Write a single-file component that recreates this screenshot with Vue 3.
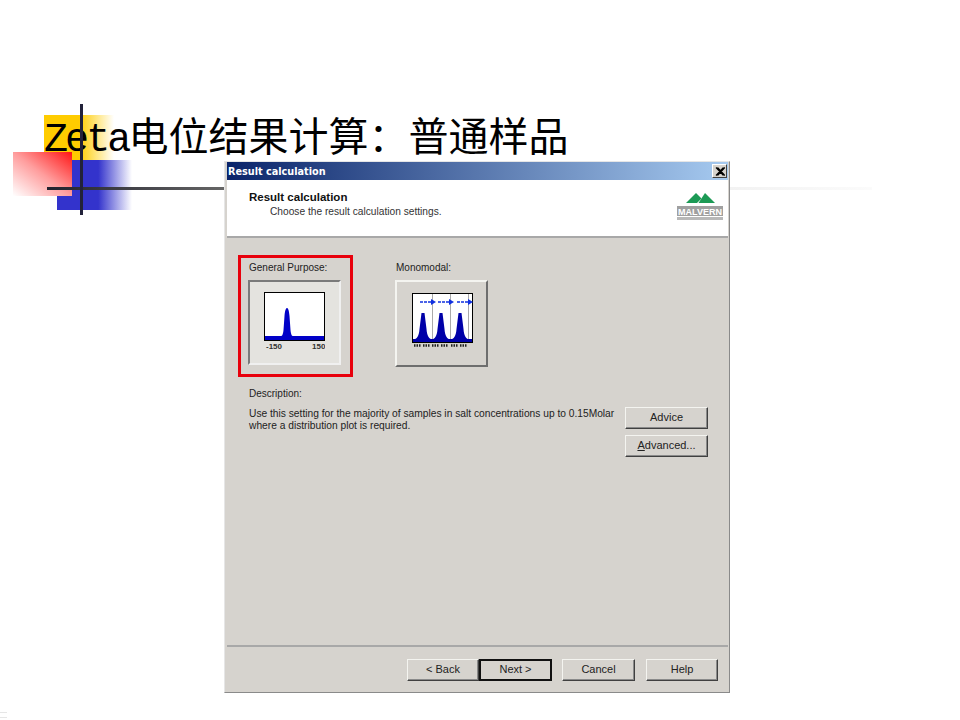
<template>
  <main class="slide">
    <div class="deco-yellow"></div>
    <div class="deco-blue"></div>
    <div class="deco-red"></div>
    <div class="deco-hline"></div>
    <div class="deco-hline-faint"></div>
    <div class="deco-corner"></div>

    <h1 class="slide-title"><span class="latin">Zeta</span>电位结果计算&#xFF1A;普通样品</h1>
    <div class="deco-vline"></div>

    <section class="dialog">
      <div class="titlebar">
        <span>Result calculation</span>
        <button class="close-btn" aria-label="Close">
          <svg width="10" height="9" viewBox="0 0 10 9">
            <path d="M1 0.5L8.5 8.5M2.5 0.5L10 8.5M8.5 0.5L1 8.5M10 0.5L2.5 8.5" stroke="#000" stroke-width="1.1" fill="none" />
          </svg>
        </button>
      </div>

      <header class="wizard-head">
        <div class="head-text">
          <h2>Result calculation</h2>
          <p>Choose the result calculation settings.</p>
        </div>
        <svg class="logo" width="52" height="30" viewBox="0 0 52 30">
          <polygon points="10,11 20,1 25.500,6.500 21,11" fill="#1c9a55" />
          <polygon points="22.500,11 29,1 39,11" fill="#1c9a55" />
          <rect x="1" y="14" width="46" height="10" fill="#a0a0a0" />
          <text x="2" y="22.500" textLength="44" lengthAdjust="spacingAndGlyphs" class="logo-text">MALVERN</text>
          <rect x="1" y="25" width="46" height="3" fill="#b8b8b8" />
        </svg>
      </header>

      <div class="wizard-body">
        <div class="options">
          <div class="option selected">
            <label>General Purpose:</label>
            <div class="tile pressed">
              <svg width="61" height="61" viewBox="0 0 61 61">
                <rect x="0.5" y="0.5" width="60" height="48" fill="#fff" stroke="#000" />
                <path d="M1 44H17C18 44 19 43 19.500 38L20.500 24C21 18 22 16 23 16C24 16 25 18 25.500 24L26.500 38C27 43 28 44 29 44H60V48H1Z" fill="#0000c8" />
                <text x="2" y="57" class="tick">-150</text>
                <text x="48" y="57" class="tick">150</text>
              </svg>
            </div>
          </div>
          <div class="option">
            <label>Monomodal:</label>
            <div class="tile mono">
              <svg width="61" height="61" viewBox="0 0 61 61">
                <rect x="0.5" y="0.5" width="60" height="49" fill="#fff" stroke="#000" />
                <path d="M20.500 1V49M38.500 1V49M56.500 1V49" stroke="#aaa" stroke-width="1" />
                <path d="M1 46H60V49H1Z" fill="#0000a8" />
                <g v-for="x in peaks" :key="x">
                  <path :d="peakPath(x)" fill="#0000a8" />
                  <path :d="'M' + (x - 3) + ' 9H' + (x + 9)" stroke="#1030e0" stroke-width="1.400" stroke-dasharray="3 1" />
                  <path :d="'M' + (x + 8) + ' 6L' + (x + 13) + ' 9L' + (x + 8) + ' 12Z'" fill="#1030e0" />
                  <path :d="'M' + (x - 9) + ' 52.500H' + (x - 2) + 'M' + (x) + ' 52.500H' + (x + 7)" stroke="#222" stroke-width="2.500" stroke-dasharray="1.500 1" />
                </g>
              </svg>
            </div>
          </div>
        </div>

        <div class="description">
          <div class="desc-text">
            <label>Description:</label>
            <p>Use this setting for the majority of samples in salt concentrations up to 0.15Molar<br />where a distribution plot is required.</p>
          </div>
          <div class="side-buttons">
            <button class="win-btn">Advice</button>
            <button class="win-btn"><u>A</u>dvanced...</button>
          </div>
        </div>
      </div>

      <footer class="wizard-foot">
        <button class="win-btn back">&lt; Back</button>
        <button class="win-btn next">Next &gt;</button>
        <button class="win-btn cancel">Cancel</button>
        <button class="win-btn help">Help</button>
      </footer>
    </section>
  </main>
</template>

<script setup>
const peaks = [11, 29, 48];

function peakPath(x) {
  return (
    "M" + (x - 10) + " 47C" + (x - 6) + " 46 " + (x - 4) + " 43 " + (x - 3.5) + " 36L" + (x - 1.5) + " 20H" + (x + 1.5) +
    "L" + (x + 3.5) + " 36C" + (x + 4) + " 43 " + (x + 6) + " 46 " + (x + 10) + " 47Z"
  );
}
</script>

<style>
body {
  background: #fff;
}
</style>

<style scoped>
.slide {
  position: relative;
  width: 960px;
  height: 720px;
  overflow: hidden;
  background: #fff;
  font-family: "Liberation Sans", Arial, sans-serif;
  padding-top: 110px;
  box-sizing: border-box;
}

.deco-yellow {
  position: absolute;
  left: 44px;
  top: 115px;
  width: 70px;
  height: 45px;
  background: linear-gradient(to right, #ffcc00 0%, #ffcc00 50%, #ffffff 100%);
}

.deco-blue {
  position: absolute;
  left: 57px;
  top: 160px;
  width: 75px;
  height: 50px;
  background: linear-gradient(to right, #3333cc 0%, #3333cc 55%, #ffffff 100%);
}

.deco-red {
  position: absolute;
  left: 13px;
  top: 152px;
  width: 59px;
  height: 44px;
  background: linear-gradient(to bottom left, #ff1515 0%, #ff9d9d 50%, #ffffff 100%);
}

.deco-vline {
  position: absolute;
  left: 80px;
  top: 104px;
  width: 3px;
  height: 111px;
  background: #22223a;
}

.deco-hline {
  position: absolute;
  left: 47px;
  top: 187px;
  width: 178px;
  height: 3px;
  background: linear-gradient(to right, #22222e, #666666);
}

.deco-hline-faint {
  position: absolute;
  left: 730px;
  top: 187px;
  width: 142px;
  height: 3px;
  background: linear-gradient(to right, #f2f2f2, #fbfbfb);
}

.deco-corner {
  position: absolute;
  left: 0;
  top: 712px;
  width: 7px;
  height: 4px;
  border-top: 1px solid #e6e6e6;
  border-bottom: 1px solid #e6e6e6;
}

.slide-title {
  position: relative;
  margin: 0 0 0 44px;
  height: 51px;
  font-family: "Noto Sans CJK SC", "Liberation Serif", serif;
  font-size: 40px;
  line-height: 48px;
  font-weight: 400;
  color: #000;
  white-space: nowrap;
}

.latin {
  font-family: "Liberation Mono", monospace;
  font-size: 40px;
  letter-spacing: -2.900px;
}

.dialog {
  position: relative;
  display: flex;
  flex-direction: column;
  width: 506px;
  height: 532px;
  box-sizing: border-box;
  margin-left: 224px;
  border: 1px solid #8a8a8a;
  border-left-color: #e6e6e6;
  border-top-color: #e6e6e6;
  padding: 0 1px 0 2px;
  background: #d6d3ce;
  color: #222;
  font-size: 10px;
}

.titlebar {
  display: flex;
  align-items: center;
  justify-content: space-between;
  height: 18px;
  padding: 0 1px;
  background: linear-gradient(to right, #0a246a, #a6caf0);
  color: #fff;
  font-family: "DejaVu Sans", sans-serif;
  font-size: 9.700px;
  font-weight: 700;
  flex: none;
}

.close-btn {
  display: flex;
  align-items: center;
  justify-content: center;
  width: 15px;
  height: 14px;
  padding: 0;
  background: #d6d3ce;
  border: 1px solid;
  border-color: #fff #404040 #404040 #fff;
}

.wizard-head {
  display: flex;
  justify-content: space-between;
  align-items: flex-start;
  height: 56px;
  padding: 0 0 0 22px;
  background: #fff;
  border-bottom: 2px solid #a8a8a8;
  flex: none;
}

.head-text h2 {
  margin: 11px 0 0;
  font-size: 11.500px;
  line-height: 13px;
  font-weight: 700;
  color: #111;
}

.head-text p {
  margin: 2px 0 0 21px;
  font-size: 10.200px;
  line-height: 12px;
  color: #333;
}

.logo {
  margin-top: 12px;
}

.logo-text {
  font-size: 9.500px;
  font-weight: 700;
  fill: #fff;
}

.wizard-body {
  flex: 1;
  padding: 23px 20px 0 21px;
}

.options {
  display: flex;
  gap: 54px;
}

.option {
  position: relative;
  width: 93px;
}

.option label,
.desc-text label {
  display: block;
  line-height: 13px;
  margin-bottom: 6px;
  padding-left: 1px;
}

.option.selected::before {
  content: "";
  position: absolute;
  left: -10px;
  top: -6px;
  box-sizing: border-box;
  width: 115px;
  height: 122px;
  border: 3px solid #e8000c;
}

.tile {
  display: flex;
  align-items: center;
  justify-content: center;
  box-sizing: border-box;
  width: 93px;
  height: 87px;
  border: 2px solid;
  border-color: #f4f4f0 #6e6e6e #6e6e6e #f4f4f0;
}

.tile.mono {
  padding-left: 2px;
}

.tile.pressed {
  height: 85px;
  margin-top: 1px;
  background: #e4e3df;
  border-color: #7a7a7a #f0f0f0 #f0f0f0 #7a7a7a;
}

.tick {
  font-size: 8px;
  font-weight: 700;
  fill: #333;
}

.description {
  display: flex;
  justify-content: space-between;
  margin-top: 20px;
}

.desc-text p {
  margin: 8px 0 0 1px;
  font-size: 10.230px;
  line-height: 12px;
}

.side-buttons {
  display: flex;
  flex-direction: column;
  gap: 6px;
  margin-top: 20px;
}

.win-btn {
  box-sizing: border-box;
  width: 83px;
  height: 22px;
  padding: 0 0 2px;
  background: #d6d3ce;
  border: 1px solid;
  border-color: #f4f4f0 #404040 #404040 #f4f4f0;
  box-shadow: inset -1px -1px 0 #8a8a8a;
  font-family: "Liberation Sans", Arial, sans-serif;
  font-size: 11px;
  color: #222;
}

.wizard-foot {
  display: flex;
  align-items: flex-start;
  height: 47px;
  padding: 12px 0 0 180px;
  box-sizing: border-box;
  border-top: 2px solid #a8a8a8;
  flex: none;
}

.back {
  width: 72px;
}

.next {
  width: 73px;
  border: 2px solid #111;
  box-shadow: none;
}

.cancel {
  width: 73px;
  margin: 0 11px 0 10px;
}

.help {
  width: 72px;
}
</style>
